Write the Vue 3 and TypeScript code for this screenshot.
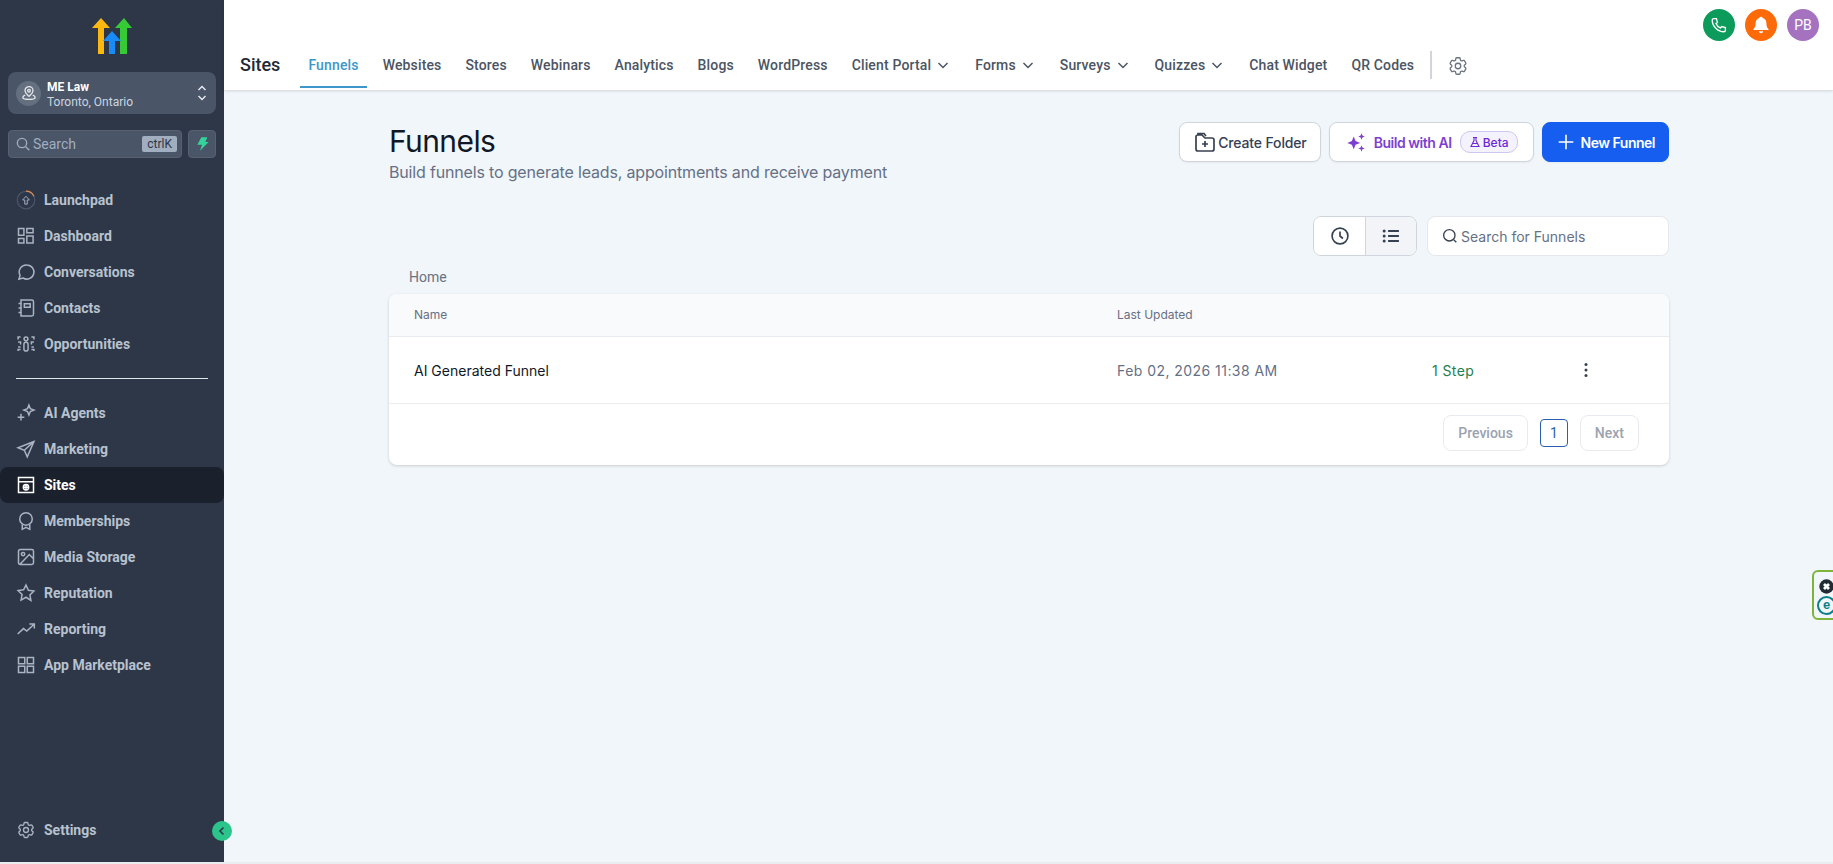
<script setup lang="ts">
interface NavItem { label: string; paths: string[]; active?: boolean }

const groupOne: NavItem[] = [
  { label: 'Dashboard', paths: ['M3 3h6.500v8H3zM13 3h7.500v5H13zM13 12h7.500v8.500H13zM3 15h6.500v5.500H3z'] },
  { label: 'Conversations', paths: ['M13 3.500a8.500 8.500 0 1 1-4.500 15.700L3.500 20.500l1.400-4.500A8.500 8.500 0 0 1 13 3.500z'] },
  { label: 'Contacts', paths: ['M6 2.500h13a2 2 0 0 1 2 2v15a2 2 0 0 1-2 2H6zM10 7h7v4h-7zM3 6.500h4M3 12h4M3 17.500h4'] },
  { label: 'Opportunities', paths: ['M12 3.500a2.300 2.300 0 1 1 0 4.600 2.300 2.300 0 0 1 0-4.600zM9.500 12.500a2.500 2.500 0 0 1 5 0V18a2.500 2.500 0 0 1-5 0zM2.500 6.500v-3h3M21.500 6.500v-3h-3M2.500 9.500h3v3M21.500 9.500h-3v3M2.500 15.500h3M21.500 15.500h-3M2.500 20.500v-2h3M21.500 20.500v-2h-3'] }
]
const groupTwo: NavItem[] = [
  { label: 'AI Agents', paths: ['M15.500 2.500l1.700 4.300 4.300 1.700-4.300 1.700-1.700 4.300-1.700-4.300-4.300-1.700 4.300-1.700zM6 13v8M2 17h8'] },
  { label: 'Marketing', paths: ['M21.500 3L2.500 10.500 10 13.500 13.500 21.500zM10 13.500L21.500 3'] },
  { label: 'Sites', active: true, paths: ['M3 3h18v18H3zM3 8h18', 'M12 11.500a3.200 3.200 0 1 1 0 6.400 3.200 3.200 0 0 1 0-6.400zM8.800 14.700h6.400M12 11.500v6.400'] },
  { label: 'Memberships', paths: ['M12 2a7.500 7.500 0 1 1 0 15 7.500 7.500 0 0 1 0-15z', 'M7.500 16v6l4.500-2.500 4.500 2.500v-6'] },
  { label: 'Media Storage', paths: ['M5 3h14a2 2 0 0 1 2 2v14a2 2 0 0 1-2 2H5a2 2 0 0 1-2-2V5a2 2 0 0 1 2-2zM8.500 6.500a2 2 0 1 1 0 4 2 2 0 0 1 0-4zM21 14l-5-5L5 20.500'] },
  { label: 'Reputation', paths: ['M12 2.500l2.900 6.200 6.600.9-4.800 4.700 1.200 6.700L12 17.100 6.100 20.500l1.200-6.700L2.500 9.100l6.600-.9z'] },
  { label: 'Reporting', paths: ['M2 18l7-6.500 4 3L22 6M16 6h6v5.500'] },
  { label: 'App Marketplace', paths: ['M3 3h7.500v7.500H3zM13.500 3H21v7.500h-7.500zM3 13.500h7.500V21H3zM13.500 13.500H21V21h-7.500z'] }
]
const gearPaths = [
  'M9.594 3.94c.09-.542.56-.94 1.11-.94h2.593c.55 0 1.02.398 1.11.94l.213 1.281c.063.374.313.686.645.87.074.04.147.083.22.127.324.196.72.257 1.075.124l1.217-.456a1.125 1.125 0 011.37.49l1.296 2.247a1.125 1.125 0 01-.26 1.431l-1.003.827c-.293.24-.438.613-.431.992a6.759 6.759 0 010 .255c-.007.378.138.75.43.99l1.005.828c.424.35.534.954.26 1.43l-1.298 2.247a1.125 1.125 0 01-1.369.491l-1.217-.456c-.355-.133-.75-.072-1.076.124a6.57 6.57 0 01-.22.128c-.331.183-.581.495-.644.869l-.213 1.28c-.09.543-.56.941-1.11.941h-2.594c-.55 0-1.02-.398-1.11-.94l-.213-1.281c-.062-.374-.312-.686-.644-.87a6.52 6.52 0 01-.22-.127c-.325-.196-.72-.257-1.076-.124l-1.217.456a1.125 1.125 0 01-1.369-.49l-1.297-2.247a1.125 1.125 0 01.26-1.431l1.004-.827c.292-.24.437-.613.43-.992a6.932 6.932 0 010-.255c.007-.378-.138-.75-.43-.99l-1.004-.828a1.125 1.125 0 01-.26-1.43l1.297-2.247a1.125 1.125 0 011.37-.491l1.216.456c.356.133.751.072 1.076-.124.072-.044.146-.087.22-.128.332-.183.582-.495.644-.869l.214-1.281z',
  'M15 12a3 3 0 11-6 0 3 3 0 016 0z'
]

const tabs = [
  { label: 'Funnels', active: true },
  { label: 'Websites' },
  { label: 'Stores' },
  { label: 'Webinars' },
  { label: 'Analytics' },
  { label: 'Blogs' },
  { label: 'WordPress' },
  { label: 'Client Portal', caret: true },
  { label: 'Forms', caret: true },
  { label: 'Surveys', caret: true },
  { label: 'Quizzes', caret: true },
  { label: 'Chat Widget' },
  { label: 'QR Codes' }
]
</script>

<template>
  <div class="app">
    <aside class="side">
      <svg class="logo" width="40" height="36" viewBox="0 0 40 36">
        <path fill="#fbb80f" d="M0 10 9 0l9 10h-6v26H6V10z" />
        <path fill="#37ca37" d="M23 10 32 0l8 10h-5v26h-7V10z" />
        <path fill="#188bf6" d="M11 23l9-10 9 10h-6v13h-6V23z" />
      </svg>

      <div class="loc">
        <span class="loc-badge">
          <svg width="16" height="16" viewBox="0 0 24 24" fill="none" stroke="#e5e7eb" stroke-width="2">
            <path d="M12 2.500a6 6 0 0 1 6 6c0 3.500-3.500 6-6 8.500-2.500-2.500-6-5-6-8.500a6 6 0 0 1 6-6z" />
            <circle cx="12" cy="8.500" r="2" />
            <path d="M6.500 15C4 16 2.500 17.500 3 19.500c.5 1.500 4 2 9 2s8.500-.5 9-2c.5-2-1-3.500-3.500-4.500" />
          </svg>
        </span>
        <span class="loc-text">
          <span class="loc-name">ME Law</span>
          <span class="loc-place">Toronto, Ontario</span>
        </span>
        <svg class="loc-arrows" width="12" height="18" viewBox="0 0 12 18" fill="none" stroke="#e5e7eb" stroke-width="1.500">
          <path d="M2.500 6 6 2.500 9.500 6M2.500 12 6 15.500 9.500 12" />
        </svg>
      </div>

      <div class="find">
        <div class="find-box">
          <svg width="16" height="16" viewBox="0 0 24 24" fill="none" stroke="#a0aec0" stroke-width="2">
            <circle cx="10.500" cy="10.500" r="7" />
            <path d="M16 16l5.500 5.500" />
          </svg>
          <span class="find-label">Search</span>
          <span class="find-key">ctrlK</span>
        </div>
        <button class="bolt">
          <svg width="16" height="16" viewBox="0 0 24 24" fill="#34d399"><path d="M11 2h9l-3 7h5L9 22l3-9H5z" /></svg>
        </button>
      </div>

      <nav class="nav">
        <a class="nav-item">
          <svg class="launch" width="22" height="22" viewBox="0 0 24 24" fill="none">
            <circle cx="12" cy="12" r="10.500" stroke="#4a5568" stroke-width="1.500" />
            <path d="M12 1.500a10.500 10.500 0 0 1 9.500 6" stroke="#dd8a4e" stroke-width="1.500" />
            <path d="M8 12l4-4.500 4 4.500h-2.500v5h-3v-5z" stroke="#a0aec0" stroke-width="1.200" />
          </svg>
          <span>Launchpad</span>
        </a>
        <a v-for="item in groupOne" :key="item.label" class="nav-item">
          <svg width="20" height="20" viewBox="0 0 24 24" fill="none" stroke="currentColor" stroke-width="1.800">
            <path v-for="d in item.paths" :key="d" :d="d" />
          </svg>
          <span>{{ item.label }}</span>
        </a>
        <div class="rule"></div>
        <a v-for="item in groupTwo" :key="item.label" class="nav-item" :class="{ on: item.active }">
          <svg width="20" height="20" viewBox="0 0 24 24" fill="none" stroke="currentColor" stroke-width="1.800">
            <path v-for="d in item.paths" :key="d" :d="d" />
          </svg>
          <span>{{ item.label }}</span>
        </a>
      </nav>

      <a class="nav-item settings">
        <svg width="20" height="20" viewBox="0 0 24 24" fill="none" stroke="currentColor" stroke-width="1.600">
          <path v-for="d in gearPaths" :key="d" :d="d" />
        </svg>
        <span>Settings</span>
      </a>
      <button class="collapse">
        <svg width="12" height="12" viewBox="0 0 12 12" fill="none" stroke="#2d3748" stroke-width="1.600"><path d="M7.500 2.500 4 6l3.500 3.500" /></svg>
      </button>
    </aside>

    <div class="page">
      <header class="head">
        <div class="head-top">
          <span class="dot dot-call">
            <svg width="18" height="18" viewBox="0 0 24 24" fill="none" stroke="#fff" stroke-width="1.800">
              <path d="M5 3.500h3.500l1.500 5-2 1.500c1 2.500 3.500 5 6 6l1.500-2 5 1.500V19c0 1-1 2-2 2C10.500 21 3 13.500 3 5.500c0-1 1-2 2-2z" />
            </svg>
          </span>
          <span class="dot dot-bell">
            <svg width="20" height="20" viewBox="0 0 24 24" fill="#fff">
              <path d="M12 2a2 2 0 0 1 2 1.700C17 4.600 18.500 7 18.500 10c0 4 1 5.500 2.500 7v1H3v-1c1.500-1.500 2.500-3 2.500-7 0-3 1.500-5.400 4.500-6.300A2 2 0 0 1 12 2zM9.500 19.500h5a2.500 2.500 0 0 1-5 0z" />
            </svg>
          </span>
          <span class="dot dot-user">PB</span>
        </div>
        <div class="head-tabs">
          <span class="head-title">Sites</span>
          <a v-for="t in tabs" :key="t.label" class="tab" :class="{ on: t.active }">
            {{ t.label }}
            <svg v-if="t.caret" class="caret" width="16" height="16" viewBox="0 0 16 16" fill="none" stroke="currentColor" stroke-width="1.500"><path d="M3.500 6 8 10.500 12.500 6" /></svg>
          </a>
          <span class="tab-sep"></span>
          <svg class="tab-gear" width="22" height="22" viewBox="0 0 24 24" fill="none" stroke="#6b7280" stroke-width="1.400">
            <path v-for="d in gearPaths" :key="d" :d="d" />
          </svg>
        </div>
      </header>

      <main class="main">
        <div class="title-row">
          <div>
            <h1>Funnels</h1>
            <p>Build funnels to generate leads, appointments and receive payment</p>
          </div>
          <div class="actions">
            <button class="btn btn-folder">
              <svg width="24" height="24" viewBox="0 0 24 24" fill="none" stroke="#374151" stroke-width="1.700">
                <path d="M3 7a2 2 0 0 1 2-2h4l3 3h7a2 2 0 0 1 2 2v9a2 2 0 0 1-2 2H5a2 2 0 0 1-2-2zM12 11v6M9 14h6M5 5V3.500h6L13 6" />
              </svg>
              Create Folder
            </button>
            <button class="btn btn-ai">
              <svg class="spark" width="22" height="22" viewBox="0 0 24 24" fill="#7e3fd1">
                <path d="M9.500 6l2 5 5 2-5 2-2 5-2-5-5-2 5-2zM18 2.500l1 2.500 2.500 1-2.500 1-1 2.500-1-2.500-2.500-1 2.500-1zM18 15.500l1 2.500 2.500 1-2.500 1-1 2.500-1-2.500-2.500-1 2.500-1z" />
              </svg>
              <span class="ai-label">Build with AI</span>
              <span class="beta">
                <svg width="12" height="12" viewBox="0 0 24 24" fill="none" stroke="#6d28d9" stroke-width="2.200"><path d="M8 3h8M10 3v6L4 21h16L14 9V3M7 15h10" /></svg>
                Beta
              </span>
            </button>
            <button class="btn btn-new">
              <svg width="18" height="18" viewBox="0 0 16 16" fill="none" stroke="#fff" stroke-width="1.400"><path d="M8 1.500v13M1.500 8h13" /></svg>
              New Funnel
            </button>
          </div>
        </div>

        <div class="tools">
          <div class="toggle">
            <button class="toggle-btn">
              <svg width="20" height="20" viewBox="0 0 24 24" fill="none" stroke="#374151" stroke-width="2"><circle cx="12" cy="12" r="9.500" /><path d="M12 6.500V12l3.500 3" /></svg>
            </button>
            <button class="toggle-btn sel">
              <svg width="20" height="20" viewBox="0 0 24 24" fill="#374151" stroke="none">
                <path d="M8.500 6h13M8.500 12h13M8.500 18h13" stroke="#374151" stroke-width="2.200" />
                <circle cx="3.800" cy="6" r="1.800" />
                <circle cx="3.800" cy="12" r="1.800" />
                <circle cx="3.800" cy="18" r="1.800" />
              </svg>
            </button>
          </div>
          <label class="search">
            <svg width="16" height="16" viewBox="0 0 24 24" fill="none" stroke="#374151" stroke-width="2"><circle cx="11" cy="11" r="8.500" /><path d="M17.500 17.500 21.500 21.500" /></svg>
            <span>Search for Funnels</span>
          </label>
        </div>

        <div class="crumb">Home</div>

        <section class="card">
          <div class="grid grid-head">
            <span>Name</span>
            <span>Last Updated</span>
            <span></span>
            <span></span>
          </div>
          <div class="grid grid-row">
            <span class="name">AI Generated Funnel</span>
            <span class="date">Feb 02, 2026 11:38 AM</span>
            <span class="step">1 Step</span>
            <svg width="16" height="16" viewBox="0 0 16 16" fill="#374151"><circle cx="8" cy="2.500" r="1.500" /><circle cx="8" cy="8" r="1.500" /><circle cx="8" cy="13.500" r="1.500" /></svg>
          </div>
          <div class="pager">
            <button class="pg">Previous</button>
            <button class="pg-num">1</button>
            <button class="pg">Next</button>
          </div>
        </section>
      </main>
    </div>

    <div class="eset">
      <svg width="15" height="15" viewBox="0 0 24 24">
        <circle cx="12" cy="12" r="11.500" fill="#222b33" />
        <path d="M8 8l8 8M16 8l-8 8" stroke="#fff" stroke-width="4.500" />
      </svg>
      <span class="eset-e">e</span>
    </div>
  </div>
</template>

<style scoped>
.app {
  display: flex;
  position: relative;
  width: 1833px;
  height: 862px;
  overflow: hidden;
  font-family: Roboto, "Liberation Sans", sans-serif;
  background: #f1f6fa;
}
button { font-family: inherit; cursor: pointer; }
a { text-decoration: none; }

/* sidebar */
.side {
  position: relative;
  flex: 0 0 224px;
  display: flex;
  flex-direction: column;
  background: #2d3748;
}
.logo { margin: 18px 0 18px 92px; flex: none; }
.loc {
  display: flex;
  align-items: center;
  height: 42px;
  margin: 0 8px;
  padding: 0 8px;
  border-radius: 8px;
  background: #4a5568;
}
.loc-badge {
  flex: none;
  display: flex;
  align-items: center;
  justify-content: center;
  width: 25px;
  height: 25px;
  border-radius: 50%;
  background: #64707f;
}
.loc-text { display: flex; flex-direction: column; margin-left: 6px; flex: 1; padding-top: 3px; }
.loc-name { font-size: 12px; line-height: 15px; font-weight: 700; color: #fff; }
.loc-place { font-size: 12px; line-height: 15px; color: #cbd5e0; }
.find { display: flex; gap: 6px; margin: 16px 8px 24px; }
.find-box {
  flex: 1;
  display: flex;
  align-items: center;
  height: 28px;
  padding: 0 4px 0 6px;
  border: 1px solid #566173;
  border-radius: 4px;
  background: #4a5568;
  box-sizing: border-box;
}
.find-label { flex: 1; margin-left: 2px; font-size: 14px; color: #a0aec0; }
.find-key {
  padding: 0 5px;
  height: 16px;
  line-height: 16px;
  font-size: 12px;
  color: #2d3748;
  background: #a0aec0;
  border-radius: 2px;
}
.bolt {
  display: flex;
  align-items: center;
  justify-content: center;
  width: 28px;
  height: 28px;
  padding: 0;
  border: 1px solid #566173;
  border-radius: 4px;
  background: #4a5568;
}
.nav { display: flex; flex-direction: column; }
.nav-item {
  display: flex;
  align-items: center;
  gap: 8px;
  height: 36px;
  padding-left: 16px;
  border-radius: 8px;
  font-size: 14px;
  font-weight: 700;
  color: #b8c2cf;
}
.nav-item svg { flex: none; width: 20px; color: #a9b3c1; }
.nav-item.on { background: #1a202c; color: #fff; }
.nav-item.on svg { color: #fff; }
.rule { height: 1px; margin: 16px 16px 16px; background: #e2e8f0; flex: none; }
.settings { margin-top: auto; margin-bottom: 14px; }
.collapse {
  position: absolute;
  right: -8px;
  bottom: 21px;
  display: flex;
  align-items: center;
  justify-content: center;
  width: 20px;
  height: 20px;
  padding: 0;
  border: none;
  border-radius: 50%;
  background: #2bc48a;
}

/* header */
.page { flex: 1; min-width: 0; display: flex; flex-direction: column; }
.head {
  flex: none;
  height: 90px;
  background: #fff;
  box-shadow: 0 1px 3px rgba(0, 0, 0, .14);
  position: relative;
}
.head-top { display: flex; justify-content: flex-end; gap: 10px; padding: 9px 14px 0 0; height: 41px; box-sizing: border-box; }
.dot {
  display: flex;
  align-items: center;
  justify-content: center;
  width: 32px;
  height: 32px;
  border-radius: 50%;
  color: #fff;
  font-size: 14px;
}
.dot-call { background: #0d9b5c; }
.dot-bell { background: #ff6a09; }
.dot-user { background: #a572c0; }
.head-tabs { display: flex; align-items: stretch; height: 47px; padding-left: 16px; gap: 8px; }
.head-title { align-self: center; margin-right: 12px; font-size: 18px; font-weight: 500; color: #1f2937; }
.tab {
  display: flex;
  align-items: center;
  gap: 2px;
  padding: 2px 8px 0;
  font-size: 14px;
  font-weight: 500;
  letter-spacing: .15px;
  color: #4b5563;
  border-bottom: 2px solid transparent;
}
.tab.on { color: #3d97c9; border-bottom-color: #3d97c9; }
.caret { margin-left: 2px; }
.tab-sep { align-self: center; width: 2px; height: 28px; margin-top: 1px; background: #d1d5db; }
.tab-gear { align-self: center; margin-left: 7px; margin-top: 2px; }

/* main */
.main { flex: 1; padding: 33px 164px 0 165px; }
.title-row { display: flex; justify-content: space-between; align-items: flex-start; }
h1 { margin: 0; font: 400 30px/36px Inter, sans-serif; letter-spacing: -.6px; color: #101828; }
.title-row p { margin: 1px 0 0; font: 400 16px/24px Inter, sans-serif; letter-spacing: -.17px; color: #667085; }
.actions { display: flex; gap: 8px; margin-top: -1px; }
.btn {
  display: flex;
  align-items: center;
  height: 40px;
  border: 1px solid #d0d5dd;
  border-radius: 8px;
  background: #fff;
  font: 500 14px Inter, sans-serif;
  color: #344054;
  box-shadow: 0 1px 2px rgba(16, 24, 40, .05);
}
.btn-folder { gap: 1px; padding: 0 13px 0 13px; letter-spacing: -.15px; }
.btn-ai { padding: 0 15px 0 15px; }
.spark { margin-right: 7px; }
.ai-label { font-weight: 600; color: #7e3fd1; font-size: 14px; letter-spacing: -.45px; }
.beta {
  display: flex;
  align-items: center;
  gap: 2px;
  height: 20px;
  margin-left: 8px;
  padding: 0 8px;
  border: 1px solid #cfc7f0;
  border-radius: 10px;
  background: #f4f2fd;
  font-size: 12px;
  font-weight: 500;
  color: #6d28d9;
}
.btn-new {
  gap: 6px;
  padding: 0 13px 0 14px;
  border-color: #155eef;
  background: #155eef;
  color: #fff;
  font-weight: 600;
  letter-spacing: -.5px;
}
.tools { display: flex; justify-content: flex-end; gap: 10px; margin-top: 32px; }
.toggle {
  display: flex;
  height: 40px;
  border: 1px solid #d0d5dd;
  border-radius: 8px;
  overflow: hidden;
  background: #fff;
  box-sizing: border-box;
}
.toggle-btn {
  display: flex;
  align-items: center;
  justify-content: center;
  width: 51px;
  padding: 0;
  border: none;
  background: #fff;
}
.toggle-btn.sel { background: #f2f4f7; border-left: 1px solid #d0d5dd; }
.search {
  display: flex;
  align-items: center;
  gap: 3px;
  width: 242px;
  height: 40px;
  padding: 0 14px;
  border: 1px solid #e4e7ec;
  border-radius: 8px;
  background: #fff;
  box-sizing: border-box;
  font: 400 14px Inter, sans-serif;
  color: #667085;
}
.crumb { margin: 11px 0 0 20px; font: 400 14px/20px Roboto, sans-serif; color: #6b7280; }
.card {
  margin-top: 7px;
  border-radius: 8px;
  background: #fff;
  box-shadow: 0 1px 3px rgba(16, 24, 40, .18);
  overflow: hidden;
}
.grid {
  display: grid;
  grid-template-columns: 703px 315px 146px 16px;
  align-items: center;
  padding-left: 25px;
}
.grid-head {
  height: 43px;
  box-sizing: border-box;
  padding-bottom: 2px;
  background: #f9fafb;
  border-bottom: 1px solid #e8ebef;
  font: 400 12px Inter, sans-serif;
  color: #667085;
}
.grid-row { height: 67px; border-bottom: 1px solid #eaecf0; font: 400 14px Inter, sans-serif; box-sizing: border-box; }
.name { color: #101828; font-weight: 400; }
.date { color: #667085; letter-spacing: .45px; }
.step { color: #25804f; letter-spacing: .4px; }
.pager { display: flex; justify-content: flex-end; align-items: center; gap: 12px; height: 61px; padding: 0 30px 3px 0; box-sizing: border-box; }
.pg {
  height: 36px;
  padding: 0 14px;
  border: 1px solid #e7eaee;
  border-radius: 8px;
  background: #fff;
  font-size: 14px;
  font-weight: 500;
  color: #9ca3af;
}
.pg-num {
  width: 28px;
  height: 28px;
  padding: 0;
  border: 1px solid #2b5fb0;
  border-radius: 4px;
  background: #fff;
  font-size: 14px;
  color: #2b5fb0;
}

/* browser extension tab */
.eset {
  position: absolute;
  right: -8px;
  top: 570px;
  display: flex;
  flex-direction: column;
  align-items: center;
  gap: 2px;
  width: 29px;
  height: 50px;
  padding-top: 7px;
  box-sizing: border-box;
  border: 2px solid #7fb43a;
  border-radius: 6px;
  background: #f1f6fa;
}
.eset-e {
  width: 15px;
  height: 15px;
  box-sizing: content-box;
  text-align: center;
  border: 2px solid #0a7f8a;
  border-radius: 50%;
  color: #0a7f8a;
  font: 700 13px/14px "Liberation Sans", sans-serif;
}
</style>

<style>
html, body { margin: 0; background: #e9edf0; }
</style>
